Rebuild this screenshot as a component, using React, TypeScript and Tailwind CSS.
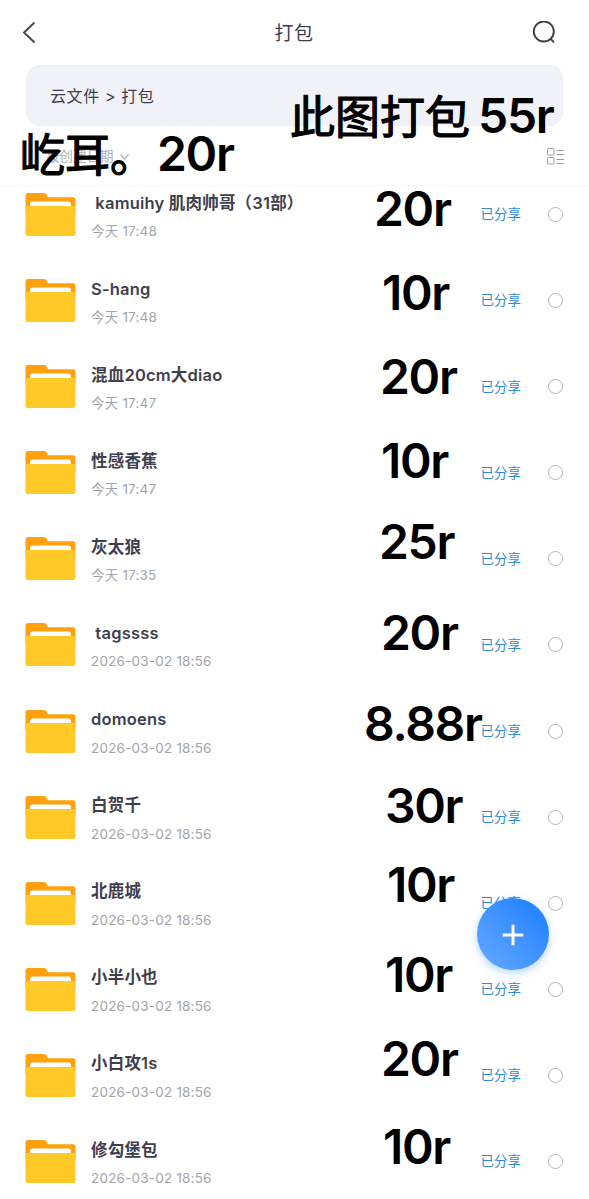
interface FolderItem {
  name: string
  date: string
  price: string
  // offset of the price note inside its row
  note: string
}

const folders: FolderItem[] = [
  { name: ' kamuihy 肌肉帅哥（31部）', date: '今天 17:48', price: '20r', note: 'left-[374px] top-[-1px]' },
  { name: 'S-hang', date: '今天 17:48', price: '10r', note: 'left-[382px] top-[-3px]' },
  { name: '混血20cm大diao', date: '今天 17:47', price: '20r', note: 'left-[380px] top-[-5px]' },
  { name: '性感香蕉', date: '今天 17:47', price: '10r', note: 'left-[381px] top-[-7px]' },
  { name: '灰太狼', date: '今天 17:35', price: '25r', note: 'left-[379px] top-[-12px]' },
  { name: ' tagssss', date: '2026-03-02 18:56', price: '20r', note: 'left-[381px] top-[-7px]' },
  { name: 'domoens', date: '2026-03-02 18:56', price: '8.88r', note: 'left-[364px] top-[-3px]' },
  { name: '白贺千', date: '2026-03-02 18:56', price: '30r', note: 'left-[385px] top-[-7px]' },
  { name: '北鹿城', date: '2026-03-02 18:56', price: '10r', note: 'left-[387px] top-[-14px]' },
  { name: '小半小也', date: '2026-03-02 18:56', price: '10r', note: 'left-[385px] top-[-10px]' },
  { name: '小白攻1s', date: '2026-03-02 18:56', price: '20r', note: 'left-[381px] top-[-12px]' },
  { name: '修勾堡包', date: '2026-03-02 18:56', price: '10r', note: 'left-[383px] top-[-10px]' },
]

export default function App() {
  return (
    <div className="relative h-[1199px] w-[589px] overflow-hidden bg-white font-['Inter','Noto_Sans_CJK_SC',sans-serif] text-[#3f404e]">
      <header className="flex h-[65px] items-center justify-between pr-[33px] pl-[22px]">
        <svg className="h-6 w-[14px]" viewBox="0 0 14 24" fill="none" stroke="#45454b" strokeWidth="1.9">
          <path d="M12.500 1.500 2 11.500l10.500 10" />
        </svg>
        <h1 className="mt-[3px] ml-[20px] text-[19px] tracking-[0.500px]">打包</h1>
        <svg className="h-6 w-6" viewBox="0 0 24 24" fill="none" stroke="#3f3f45" strokeWidth="1.9">
          <circle cx="11.800" cy="10.500" r="10" />
          <path d="m18.300 17.300 3.700 4" />
        </svg>
      </header>

      <div className="relative mx-[26px] flex h-[61px] items-center rounded-[14px] bg-[#f1f2f7] px-[24px] text-[16px] tracking-[0.600px]">
        <span>云文件 &gt; 打包</span>
        <Note className="top-[27px] left-[264px]">
          <span className="relative top-px text-[45px] font-normal tracking-normal [-webkit-text-stroke:1.2px_#000]">此图打包</span>
          <span className="ml-[8px]">55r</span>
        </Note>
      </div>

      <div className="relative flex h-[60px] items-center justify-between border-b border-[#f8f8f8] pr-[25px] pl-[46px] text-[#aeb0b6]">
        <div className="mt-[2px] flex items-center gap-[6px] text-[13.500px]">
          <span>按创建日期</span>
          <svg className="h-[6px] w-[9px]" viewBox="0 0 9 6" fill="none" stroke="currentColor" strokeWidth="1.200">
            <path d="m.5.5 4 4.500 4-4.500" />
          </svg>
        </div>
        <svg className="mt-[2px] h-[17px] w-[17px]" viewBox="0 0 17 17" fill="none" stroke="#9c9ea5">
          <rect x=".5" y=".5" width="6.500" height="6.500" rx=".8" />
          <rect x=".5" y="9.500" width="6.500" height="6.500" rx=".8" />
          <path d="M9.500 2.500H17M9.500 6.500H17M9.500 11.500H17M9.500 15.500H17" />
        </svg>
        <Note className="top-[4px] left-[20px]">
          <span className="relative top-px text-[45px] font-normal tracking-normal [-webkit-text-stroke:1.2px_#000]">屹耳。</span>
          <span className="ml-[2px]">20r</span>
        </Note>
      </div>

      <ul>
        {folders.map((folder) => (
          <FolderRow key={folder.name} folder={folder} />
        ))}
      </ul>

      <button
        type="button"
        aria-label="新建"
        className="absolute top-[898px] left-[477px] flex h-[72px] w-[72px] items-center justify-center rounded-full bg-linear-to-tr from-[#63a9ff] to-[#127dff] shadow-[0_3px_8px_rgba(40,140,255,0.35)]"
      >
        <svg className="mt-px h-[22px] w-[22px]" viewBox="0 0 20 20" stroke="#fff" strokeWidth="2.700">
          <path d="M10 .7v18.600M.7 10h18.600" />
        </svg>
      </button>
    </div>
  )
}

function FolderRow({ folder }: { folder: FolderItem }) {
  return (
    <li className="relative flex h-[86.1px] pt-[7px] pr-[26px] pl-[25px]">
      <FolderIcon />
      <div className="ml-[15px] flex-1 pt-[0.500px] whitespace-pre">
        <p className="h-[18px] text-[16.500px] leading-[18px] font-semibold tracking-[0.200px]">{folder.name}</p>
        <p className="mt-[10.500px] h-[18px] text-[13.500px] leading-[18px] tracking-[0.200px] text-[#a3a4aa]">
          {folder.date}
        </p>
      </div>
      <div className="flex h-[43px] items-center gap-[27px]">
        <span className="text-[13.500px] text-[#3289d3]">已分享</span>
        <span className="h-[15px] w-[15px] rounded-full border border-[#b4b4b6]" />
      </div>
      <Note className={folder.note}>{folder.price}</Note>
    </li>
  )
}

function FolderIcon() {
  return (
    <svg className="h-[43px] w-[51px]" viewBox="0 0 51 43">
      <path
        d="M.5 2.500Q.5 0 3 0H19q2 0 2.700 1.700L23 4.200h25Q50.500 4.200 50.500 6.700V20H.5Z"
        fill="#ffa10f"
      />
      <path d="M5 16v-4.500Q5 8.500 8 8.500h35q3 0 3 3v4.500Z" fill="#fff" />
      <path d="M.5 13h50V40.500q0 2.500-2.500 2.500h-45Q.5 43 .5 40.500Z" fill="#ffc928" />
    </svg>
  )
}

function Note({ className, children }: { className: string; children: React.ReactNode }) {
  return (
    <div
      className={`absolute z-10 flex h-[48px] items-baseline text-[48px] leading-[48px] font-semibold tracking-[-1.300px] whitespace-nowrap text-black ${className}`}
    >
      {children}
    </div>
  )
}
